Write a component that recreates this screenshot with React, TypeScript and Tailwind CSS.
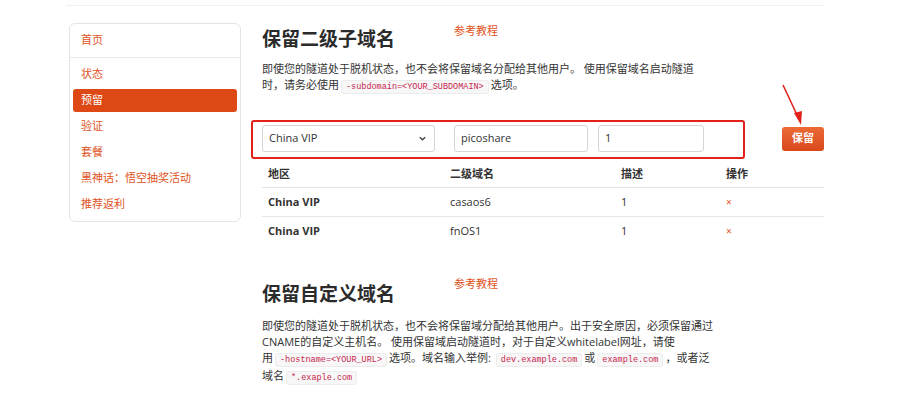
const sans = "font-['Open_Sans','Noto_Sans_CJK_SC',sans-serif]";

function Code({ children }: { children: React.ReactNode }) {
  return (
    <code className="mx-[2px] whitespace-nowrap rounded-[3px] border border-[#ececec] bg-[#f7f7f7] px-[4px] py-[1px] font-['Liberation_Mono',monospace] text-[8.5px] text-[#c7254e]">
      {children}
    </code>
  );
}

const menu = ["状态", "预留", "验证", "套餐", "黑神话：悟空抽奖活动", "推荐返利"];

const rows = [
  { area: "China VIP", sub: "casaos6", desc: "1" },
  { area: "China VIP", sub: "fnOS1", desc: "1" },
];

export default function App() {
  return (
    <div className={`h-[400px] w-[907px] overflow-hidden bg-white text-[#333] ${sans}`}>
      <div className="ml-[66px] h-[6px] w-[759px] border-b border-[#f0f0f0]" />

      <div className="flex pl-[69px] pt-[17px]">
        {/* sidebar */}
        <div className="h-[199px] w-[172px] shrink-0 rounded-[6px] border border-[#e4e4e4] text-[11px] text-[#e0531c]">
          <div className="flex h-[34px] items-center border-b border-[#e8e8e8] pl-[11px]">首页</div>
          <div className="px-[3px] pt-[3px]">
            {menu.map((m) => (
              <div key={m} className="flex h-[26px] items-center">
                <div
                  className={
                    m === "预留"
                      ? "flex h-[23px] w-full items-center rounded-[3px] bg-[#dd4814] pl-[8px] text-white"
                      : "pl-[8px]"
                  }
                >
                  {m}
                </div>
              </div>
            ))}
          </div>
        </div>

        {/* main */}
        <div className="ml-[21px] w-[562px]">
          <div className="mt-[4px] flex items-start">
            <h2 className="w-[192px] text-[19px] font-bold leading-[24px] text-[#2b2b2b]">保留二级子域名</h2>
            <a className="mt-[-4px] text-[11px] text-[#e0531c]">参考教程</a>
          </div>
          <p className="mt-[10px] w-[448px] text-[11px] leading-[16px]">
            即使您的隧道处于脱机状态，也不会将保留域名分配给其他用户。 使用保留域名启动隧道时，请务必使用
            <Code>-subdomain=&lt;YOUR_SUBDOMAIN&gt;</Code>选项。
          </p>

          <div className="relative mt-[30px] flex items-center">
            <div className="absolute left-[-11px] top-[-5px] h-[39px] w-[494px] rounded-[3px] border-2 border-[#e3211b]" />
            <div className="flex h-[27px] w-[173px] items-center justify-between rounded-[3px] border border-[#d6d6d6] pl-[6px] pr-[7px] text-[11px]">
              <span>China VIP</span>
              <svg width="9" height="9" viewBox="0 0 10 10">
                <path d="M2 3.5 L5 6.5 L8 3.5" fill="none" stroke="#444" strokeWidth="1.5" />
              </svg>
            </div>
            <div className="ml-[19px] flex h-[27px] w-[134px] items-center rounded-[3px] border border-[#d6d6d6] pl-[6px] text-[11px]">
              picoshare
            </div>
            <div className="ml-[10px] flex h-[27px] w-[106px] items-center rounded-[3px] border border-[#d6d6d6] pl-[6px] text-[11px]">
              1
            </div>
            <button className="ml-[78px] h-[24px] w-[42px] rounded-[3px] bg-gradient-to-b from-[#ec6a36] to-[#d9481a] text-[11px] font-bold text-white">
              保留
            </button>
            <svg className="absolute left-[516px] top-[-42px]" width="30" height="46" viewBox="0 0 30 46">
              <path d="M5 2 L20 34" stroke="#e3211b" strokeWidth="1.6" />
              <path d="M16 30 L23 42 L24 28 Z" fill="#e3211b" />
            </svg>
          </div>

          <div className="mt-[10px] text-[11px]">
            <div className="flex h-[26px] items-center border-b border-[#e2e2e2] font-semibold">
              <div className="w-[182px] pl-[6px]">地区</div>
              <div className="w-[171px] pl-[6px]">二级域名</div>
              <div className="w-[105px] pl-[6px]">描述</div>
              <div className="pl-[6px]">操作</div>
            </div>
            {rows.map((r, i) => (
              <div
                key={r.sub}
                className={`flex h-[29px] items-center ${i === 0 ? "border-b border-[#e6e6e6]" : ""}`}
              >
                <div className="w-[182px] pl-[6px] font-bold">{r.area}</div>
                <div className="w-[171px] pl-[6px]">{r.sub}</div>
                <div className="w-[105px] pl-[6px]">{r.desc}</div>
                <div className="pl-[6px] text-[10px] text-[#e0531c]">×</div>
              </div>
            ))}
          </div>

          <div className="mt-[36px] flex items-start">
            <h2 className="w-[192px] text-[19px] font-bold leading-[24px] text-[#2b2b2b]">保留自定义域名</h2>
            <a className="mt-[-6px] text-[11px] text-[#e0531c]">参考教程</a>
          </div>
          <p className="mt-[12px] w-[456px] text-[11px] leading-[16px]">
            即使您的隧道处于脱机状态，也不会将保留域分配给其他用户。出于安全原因，必须保留通过CNAME的自定义主机名。 使用保留域启动隧道时，对于自定义whitelabel网址，请使用
            <Code>-hostname=&lt;YOUR_URL&gt;</Code>选项。域名输入举例: <Code>dev.example.com</Code>或
            <Code>example.com</Code>，或者泛域名<Code>*.exaple.com</Code>
          </p>
        </div>
      </div>
    </div>
  );
}
